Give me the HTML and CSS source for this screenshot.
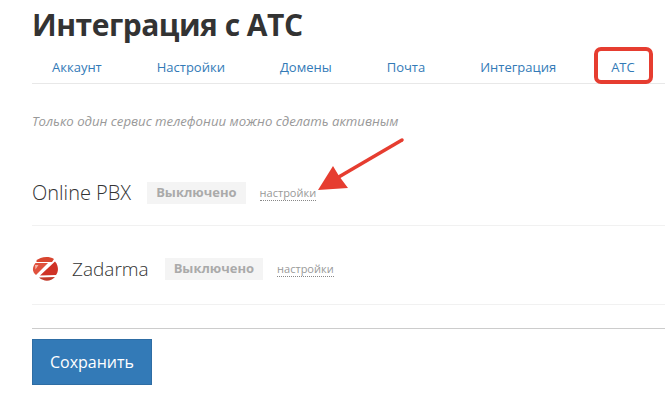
FILE: index.html
```html
<!DOCTYPE html>
<html lang="ru">
<head>
    <meta charset="UTF-8">
    <meta name="viewport" content="width=device-width, initial-scale=1.0">
    <title>Интеграция с АТС</title>
    <link rel="stylesheet" href="styles.css">
</head>
<body>
    <div class="page">
        <h1 class="page-title">Интеграция с АТС</h1>

        <ul class="tabs">
            <li><a href="#">Аккаунт</a></li>
            <li><a href="#">Настройки</a></li>
            <li><a href="#">Домены</a></li>
            <li><a href="#">Почта</a></li>
            <li><a href="#">Интеграция</a></li>
            <li class="tab-marked"><a href="#">АТС</a></li>
        </ul>

        <p class="hint">Только один сервис телефонии можно сделать активным</p>

        <div class="service service-first">
            <span class="service-name">Online PBX</span>
            <span class="status">Выключено</span>
            <a class="service-link" href="#">настройки</a>
        </div>

        <div class="service service-second">
            <svg class="service-logo" viewBox="0 0 26 26" width="26" height="26">
                <path fill="#d8452f" d="M4 5 C8 1 16 -0.5 22 3 L20 6 L5 6 Z"/>
                <path fill="#e0513d" d="M3.5 7 L16 7 L4 19 C0 16 0 11 3.5 7 Z"/>
                <path fill="#f4b5a8" d="M3 9 L6.5 9 L3.5 13.5 Z"/>
                <path fill="#cf3226" d="M23 5.5 C27 10 26.5 16 24 19 L8 19.5 Z"/>
                <path fill="#c23a2b" d="M7 21.5 L23 21 C19 25.5 12 26 7 21.5 Z"/>
            </svg>
            <span class="service-name">Zadarma</span>
            <span class="status">Выключено</span>
            <a class="service-link" href="#">настройки</a>
        </div>

        <hr class="form-line">
        <button class="save-btn">Сохранить</button>
    </div>

    <!-- red arrow drawn over the screenshot -->
    <svg class="arrow" viewBox="0 0 100 70" width="100" height="70">
        <path d="M92 10 L27 48" stroke="#e63d30" stroke-width="3.5" stroke-linecap="round" fill="none"/>
        <path fill="#e63d30" d="M8 60 L23 36 L29 46 L38 58 Z"/>
    </svg>
</body>
</html>
```

FILE: styles.css
```css
body {
    margin: 0;
    height: 405px;
    overflow: hidden;
    position: relative;
    font-family: "Open Sans", "Noto Sans", sans-serif;
    background-color: #fff;
    color: #333;
}

a {
    text-decoration: none;
}

.page {
    padding: 7px 0 0 32px;
}

.page-title {
    margin: 0;
    font-size: 30px;
    line-height: 36px;
    font-weight: 700;
    letter-spacing: -0.5px;
    color: #333;
}

.tabs {
    display: flex;
    gap: 15px;
    margin: 7px 0 0;
    padding: 0;
    height: 33px;
    list-style: none;
    border-bottom: 1px solid #e8e8e8;
}

.tabs li {
    position: relative;
    padding: 0 20px;
    font-size: 13px;
    line-height: 35px;
}

.tabs a {
    color: #337ab7;
}

/* red frame around the last tab */
.tab-marked::after {
    content: "";
    position: absolute;
    left: 3px;
    top: -3px;
    width: 51px;
    height: 29px;
    border: 4px solid #e63d30;
    border-radius: 7px;
}

.hint {
    margin: 28px 0 0;
    font-size: 13.2px;
    line-height: 18px;
    font-style: italic;
    color: #999;
}

.service {
    display: flex;
    align-items: center;
    border-bottom: 1px solid #f1f1f1;
}

.service-first {
    margin-top: 52px;
    padding-bottom: 21px;
}

.service-first .service-name {
    font-size: 20px;
}

.service-second {
    padding: 30px 0 22px;
}

.service-name {
    font-size: 19px;
    line-height: 22px;
    color: #333;
    font-weight: 300;
}

.service-logo {
    margin-right: 14px;
}

.status {
    margin-left: 16px;
    padding: 0 9px;
    height: 22px;
    line-height: 21px;
    font-size: 13px;
    font-weight: 700;
    color: #aaa;
    background: #f4f4f4;
}

.service-link {
    margin-left: 14px;
    font-size: 11px;
    line-height: 14px;
    color: #999;
    border-bottom: 1px dotted #888;
}

.form-line {
    margin: 23px 0 0;
    border: 0;
    border-top: 1px solid #ccc;
}

.save-btn {
    display: block;
    margin-top: 10px;
    width: 120px;
    height: 46px;
    padding: 0;
    font-family: inherit;
    font-size: 16px;
    color: #fff;
    background: #337ab7;
    border: 1px solid #2e6da4;
}

.arrow {
    position: absolute;
    left: 310px;
    top: 130px;
}
```
